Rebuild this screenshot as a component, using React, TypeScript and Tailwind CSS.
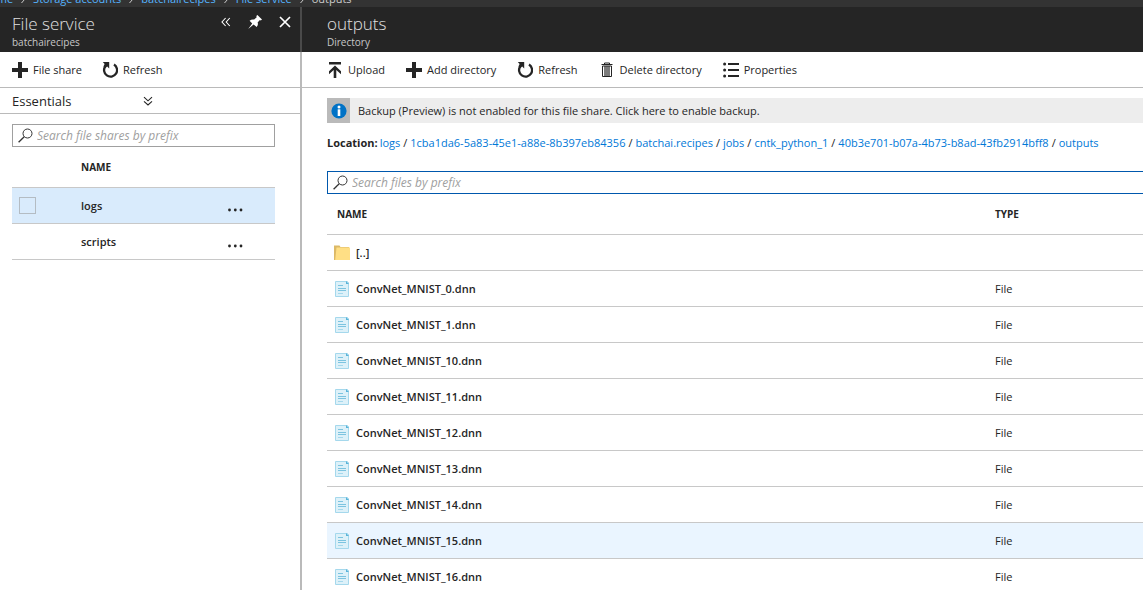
import React from 'react';

const PlusIcon = () => (
  <svg className="size-4 shrink-0" viewBox="0 0 16 16" fill="#252525" aria-hidden="true">
    <path d="M6 0h4v6h6v4h-6v6H6v-6H0V6h6z" />
  </svg>
);

const RefreshIcon = () => (
  <svg className="size-4 shrink-0" viewBox="0 0 16 16" aria-hidden="true">
    <path d="M12 2.600A6.500 6.500 0 1 1 3.400 4.200" fill="none" stroke="#252525" strokeWidth="2.300" />
    <path d="M0.800 0H7.200V6.400L5.200 4.600 3.200 6 1.400 4.600 2.600 1.900z" fill="#252525" />
  </svg>
);

const UploadIcon = () => (
  <svg className="size-4 shrink-0" viewBox="0 0 16 16" fill="#252525" aria-hidden="true">
    <path d="M2 0h12v2.600H2zM8 3.600l6 5.600v3L9.300 8v8H6.700V8L2 12.200v-3z" />
  </svg>
);

const TrashIcon = () => (
  <svg className="size-4 shrink-0" viewBox="0 0 16 16" aria-hidden="true">
    <path d="M5.500 2V1h5v1M2.500 2.500h11" fill="none" stroke="#252525" />
    <path d="M3.500 4v10.500h9V4z" fill="none" stroke="#252525" />
    <path d="M6 4v10M8 4v10M10 4v10" stroke="#252525" strokeWidth="1.200" />
  </svg>
);

const ListIcon = () => (
  <svg className="size-4 shrink-0" viewBox="0 0 16 16" fill="#252525" aria-hidden="true">
    <circle cx="1.600" cy="2" r="1.500" />
    <circle cx="1.600" cy="8" r="1.500" />
    <circle cx="1.600" cy="14" r="1.500" />
    <path d="M5 1h11v2H5zM5 7h11v2H5zM5 13h11v2H5z" />
  </svg>
);

const SearchIcon = () => (
  <svg className="size-4 shrink-0" viewBox="0 0 16 16" fill="none" stroke="#333" aria-hidden="true">
    <circle cx="9.500" cy="5.500" r="4.500" strokeWidth="1" />
    <path d="M6.200 8.800L0.600 14.200" strokeWidth="1.300" />
  </svg>
);

const FolderIcon = () => (
  <svg className="size-4 shrink-0" viewBox="0 0 16 16" aria-hidden="true">
    <path d="M0 0.500h5.500l1 1.500H15V15H0z" fill="#dcb967" />
    <path d="M2.500 2.500H16V15H1.200z" fill="#ffdf85" />
  </svg>
);

const FileIcon = () => (
  <svg className="size-4 shrink-0" viewBox="0 0 16 16" aria-hidden="true">
    <path d="M1.500 0.500h12l1 1v14h-13z" fill="#ddf1f9" stroke="#a5d8ec" />
    <path d="M12 0l3 3h-3z" fill="#59b4d9" />
    <path d="M4 4.500h5M4 7.500h8M4 9.500h8" stroke="#7cc4e0" />
    <path d="M4 12.500h5" stroke="#a5d8ec" />
  </svg>
);

const InfoIcon = () => (
  <svg className="size-4" viewBox="0 0 16 16" aria-hidden="true">
    <circle cx="8" cy="8" r="7.600" fill="#0072c6" />
    <circle cx="8" cy="4" r="1.500" fill="#fff" />
    <path d="M6.700 6.300h2.600V13H6.700z" fill="#fff" />
  </svg>
);

const DoubleChevron = ({ className }: { className: string }) => (
  <svg className={className} viewBox="0 0 10 10" fill="none" stroke="currentColor" strokeWidth="1.100" aria-hidden="true">
    <path d="M4.600 1L1 5l3.600 4M8.800 1L5.200 5l3.600 4" />
  </svg>
);

const PinIcon = () => (
  <svg className="h-[14px] w-[14px]" viewBox="0 0 14 14" fill="#fff" aria-hidden="true">
    <path d="M9.400 0L14 4.400 12.800 5.400 11.900 5.100 9.600 7.500C10.300 9.200 9.900 10.600 8.600 12L5.600 9.400 0.200 13.900 4.200 8.500 1.600 5.800C2.900 4.600 4.500 4.200 6.200 4.600L8.700 2.200 8.300 1.100z" />
  </svg>
);

const CloseIcon = () => (
  <svg className="h-3 w-3" viewBox="0 0 12 12" stroke="#fff" strokeWidth="1.700" aria-hidden="true">
    <path d="M1 1l10 10M11 1L1 11" />
  </svg>
);

const CrumbArrow = () => (
  <svg className="h-4 w-1 shrink-0" viewBox="0 0 4 16" fill="none" stroke="#ccc" aria-hidden="true">
    <path d="M0.500 5l3 3.500-3 3.500" />
  </svg>
);

function Command({ icon, label }: { icon: React.ReactNode; label: string }) {
  return (
    <button type="button" className="flex items-center gap-[5px] whitespace-nowrap">
      {icon}
      {label}
    </button>
  );
}

function SearchBox({ id, label, border }: { id: string; label: string; border: string }) {
  return (
    <div className={`flex h-[23px] items-center border pl-[5px] ${border}`}>
      <label htmlFor={id} aria-label={label}>
        <SearchIcon />
      </label>
      <input
        id={id}
        type="text"
        placeholder={label}
        className="h-full min-w-0 flex-1 bg-transparent pl-[3px] text-[12px] outline-none placeholder:text-[#a0a0a0] placeholder:italic"
      />
    </div>
  );
}

const crumbs = ['Home', 'Storage accounts', 'batchairecipes', 'File service'];
const location = [
  'logs',
  '1cba1da6-5a83-45e1-a88e-8b397eb84356',
  'batchai.recipes',
  'jobs',
  'cntk_python_1',
  '40b3e701-b07a-4b73-b8ad-43fb2914bff8',
  'outputs',
];
const files = ['0', '1', '10', '11', '12', '13', '14', '15', '16'].map((n) => `ConvNet_MNIST_${n}.dnn`);

function FileServiceBlade() {
  return (
    <section className="w-[302px] shrink-0 border-r-2 border-[#bababa]">
      <header className="-mr-[2px] flex h-[45px] justify-between border-r-2 border-[#4a4a4a] bg-[#252525] pr-[9px] pl-3">
        <div className="pt-[5px]">
          <h1 className="text-[17px] leading-6 font-light text-[#e0e0e0]">File service</h1>
          <p className="text-[10px] leading-3 text-[#c8c8c8]">batchairecipes</p>
        </div>
        <div className="flex h-[30px] items-center gap-[17px] text-white">
          <button type="button" aria-label="Collapse">
            <DoubleChevron className="h-[10px] w-[10px]" />
          </button>
          <button type="button" aria-label="Pin">
            <PinIcon />
          </button>
          <button type="button" aria-label="Close">
            <CloseIcon />
          </button>
        </div>
      </header>
      <div className="flex h-9 items-center gap-5 border-b border-[#bababa] pl-3">
        <Command icon={<PlusIcon />} label="File share" />
        <Command icon={<RefreshIcon />} label="Refresh" />
      </div>
      <button type="button" className="flex h-[26px] w-full items-center border-b border-[#bababa] pl-3 text-left text-[13px]">
        <span className="w-[131px]">Essentials</span>
        <DoubleChevron className="h-[10px] w-[10px] -rotate-90" />
      </button>
      <div className="pt-[10px] pr-[25px] pl-3">
        <SearchBox id="share-search" label="Search file shares by prefix" border="border-[#a0a0a0]" />
        <table className="w-full table-fixed border-collapse text-left">
          <thead>
            <tr className="h-10 border-b border-[#c8c8c8]">
              <th className="w-[69px]" />
              <th className="text-[10px] font-bold">NAME</th>
              <th className="w-[60px]" />
            </tr>
          </thead>
          <tbody>
            {['logs', 'scripts'].map((name, i) => (
              <tr key={name} className={`h-9 border-b border-[#c8c8c8] ${i === 0 ? 'bg-[#d9ebfc]' : ''}`}>
                <td className="pl-[7px]">
                  {i === 0 && (
                    <input
                      type="checkbox"
                      aria-label={`Select ${name}`}
                      className="block h-[17px] w-[17px] appearance-none border border-[#b4bcc3]"
                    />
                  )}
                </td>
                <td className="pt-[2px] font-semibold">{name}</td>
                <td>
                  <button type="button" aria-label={`More actions for ${name}`} className="block pt-[10px] pl-3">
                    <svg className="h-1 w-4" viewBox="0 0 16 4" fill="#252525" aria-hidden="true">
                      <circle cx="2.500" cy="2" r="1.400" />
                      <circle cx="8.300" cy="2" r="1.400" />
                      <circle cx="14" cy="2" r="1.400" />
                    </svg>
                  </button>
                </td>
              </tr>
            ))}
          </tbody>
        </table>
      </div>
    </section>
  );
}

function DirectoryBlade() {
  return (
    <section className="min-w-0 flex-1">
      <header className="h-[45px] bg-[#252525] pt-[5px] pl-[25px]">
        <h1 className="text-[17px] leading-6 font-light text-[#e0e0e0]">outputs</h1>
        <p className="text-[10px] leading-3 text-[#c8c8c8]">Directory</p>
      </header>
      <div className="flex h-9 items-center gap-[21px] border-b border-[#bababa] pl-[25px]">
        <Command icon={<UploadIcon />} label="Upload" />
        <Command icon={<PlusIcon />} label="Add directory" />
        <Command icon={<RefreshIcon />} label="Refresh" />
        <Command icon={<TrashIcon />} label="Delete directory" />
        <Command icon={<ListIcon />} label="Properties" />
      </div>
      <div className="pt-[10px] pl-[25px]">
        <button type="button" className="flex h-[25px] w-full items-center bg-[#ededed] text-left">
          <span className="flex h-full w-[23px] items-center justify-center bg-[#bababa]">
            <InfoIcon />
          </span>
          <span className="pl-2">Backup (Preview) is not enabled for this file share. Click here to enable backup.</span>
        </button>
        <nav aria-label="Location" className="flex h-12 items-center pb-2 whitespace-nowrap">
          <b className="pr-[2px] font-bold">Location:</b>
          {location.map((part, i) => (
            <React.Fragment key={part}>
              {i > 0 && <span className="px-[3px]">/</span>}
              <a href="#" className="text-[#0078d7]">
                {part}
              </a>
            </React.Fragment>
          ))}
        </nav>
        <div className="overflow-hidden">
          <div className="-mr-px">
            <SearchBox id="file-search" label="Search files by prefix" border="border-[#0058ad]" />
          </div>
        </div>
        <table className="w-full table-fixed border-collapse text-left">
          <thead>
            <tr className="h-10 border-b border-[#c8c8c8] text-[10px]">
              <th className="pl-[10px] font-bold">NAME</th>
              <th className="w-[148px] font-bold">TYPE</th>
            </tr>
          </thead>
          <tbody>
            <tr className="h-9 border-b border-[#c8c8c8]">
              <td className="pt-[2px] pl-[7px]">
                <a href="#" className="flex items-center gap-[6px] font-semibold">
                  <FolderIcon />
                  [..]
                </a>
              </td>
              <td />
            </tr>
            {files.map((name, i) => (
              <tr key={name} className={`h-9 border-b border-[#c8c8c8] ${i === 7 ? 'bg-[#eaf5ff]' : ''}`}>
                <td className="pt-[2px] pl-[7px]">
                  <a href="#" className="flex items-center gap-[6px] font-semibold">
                    <FileIcon />
                    {name}
                  </a>
                </td>
                <td className="pt-[2px]">File</td>
              </tr>
            ))}
          </tbody>
        </table>
      </div>
    </section>
  );
}

export default function App() {
  return (
    <div className="flex h-screen flex-col overflow-hidden bg-white font-['Open_Sans','Noto_Sans',sans-serif] text-[11px] leading-4 text-[#252525]">
      <nav aria-label="Breadcrumb" className="flex h-[7px] shrink-0 items-end gap-2 overflow-hidden bg-[#333] whitespace-nowrap">
        {crumbs.map((c, i) => (
          <React.Fragment key={c}>
            <a href="#" className={`text-[#55b3ff] ${i === 0 ? '-ml-[18px]' : ''}`}>
              {c}
            </a>
            <CrumbArrow />
          </React.Fragment>
        ))}
        <span className="text-[#ccc]">outputs</span>
      </nav>
      <main className="flex min-h-0 flex-1">
        <FileServiceBlade />
        <DirectoryBlade />
      </main>
    </div>
  );
}
